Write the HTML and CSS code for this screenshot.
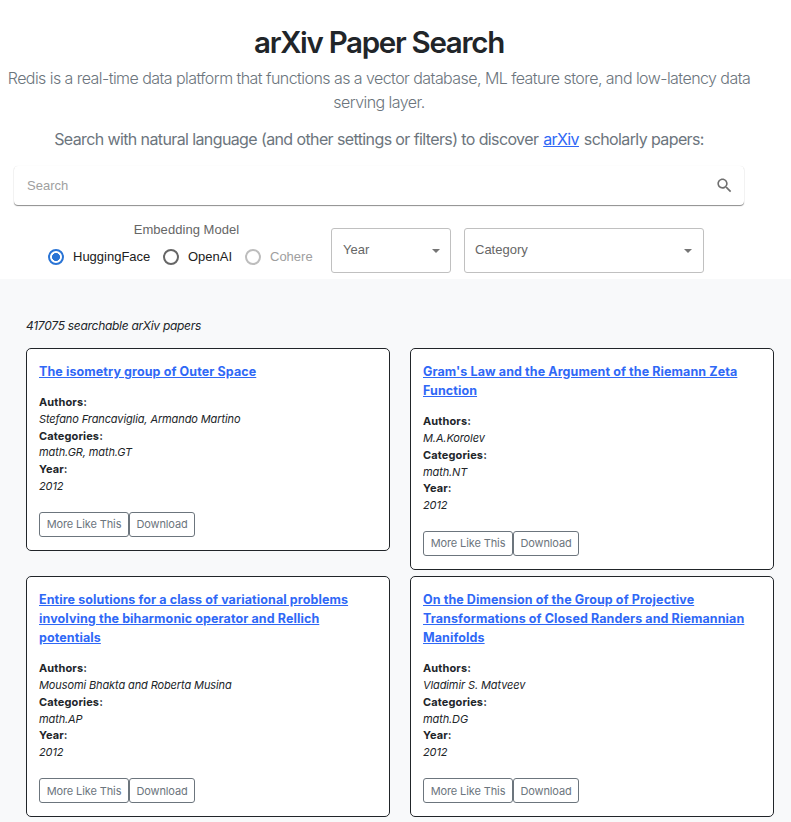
FILE: index.html
```html
<!DOCTYPE html>
<html lang="en">
<head>
<meta charset="utf-8">
<title>arXiv Paper Search</title>
<link rel="stylesheet" href="styles.css">
</head>
<body>
<header class="hero">
  <h1>arXiv Paper Search</h1>
  <p class="lead">Redis is a real-time data platform that functions as a vector database, ML feature store, and low-latency data<br>serving layer.</p>
  <p class="lead second">Search with natural language (and other settings or filters) to discover <a href="#">arXiv</a> scholarly papers:</p>
  <div class="search"><span>Search</span>
    <svg width="19" height="19" viewBox="0 0 24 24"><path d="M15.5 14h-.79l-.28-.27C15.41 12.59 16 11.11 16 9.5 16 5.91 13.09 3 9.5 3S3 5.91 3 9.5 5.91 16 9.5 16c1.61 0 3.09-.59 4.23-1.57l.27.28v.79l5 4.99L20.49 19l-4.99-5zm-6 0C7.01 14 5 11.99 5 9.5S7.01 5 9.5 5 14 7.01 14 9.5 11.99 14 9.5 14z"/></svg>
  </div>
  <div class="controls">
    <div class="model">
      <div class="model-label">Embedding Model</div>
      <div class="radios">
        <label class="on"><i></i><span>HuggingFace</span></label>
        <label><i></i><span>OpenAI</span></label>
        <label class="off"><i></i><span>Cohere</span></label>
      </div>
    </div>
    <div class="select year">Year<b></b></div>
    <div class="select category">Category<b></b></div>
  </div>
</header>
<main>
  <p class="count">417075 searchable arXiv papers</p>
  <div class="grid">
    <article>
      <h2><a href="#">The isometry group of Outer Space</a></h2>
      <div class="meta"><strong>Authors:</strong><em>Stefano Francaviglia, Armando Martino</em><strong>Categories:</strong><em>math.GR, math.GT</em><strong>Year:</strong><em>2012</em></div>
      <div class="buttons"><button>More Like This</button><button>Download</button></div>
    </article>
    <article>
      <h2><a href="#">Gram's Law and the Argument of the Riemann Zeta<br>Function</a></h2>
      <div class="meta"><strong>Authors:</strong><em>M.A.Korolev</em><strong>Categories:</strong><em>math.NT</em><strong>Year:</strong><em>2012</em></div>
      <div class="buttons"><button>More Like This</button><button>Download</button></div>
    </article>
    <article>
      <h2><a href="#">Entire solutions for a class of variational problems<br>involving the biharmonic operator and Rellich<br>potentials</a></h2>
      <div class="meta"><strong>Authors:</strong><em>Mousomi Bhakta and Roberta Musina</em><strong>Categories:</strong><em>math.AP</em><strong>Year:</strong><em>2012</em></div>
      <div class="buttons"><button>More Like This</button><button>Download</button></div>
    </article>
    <article>
      <h2><a href="#">On the Dimension of the Group of Projective<br>Transformations of Closed Randers and Riemannian<br>Manifolds</a></h2>
      <div class="meta"><strong>Authors:</strong><em>Vladimir S. Matveev</em><strong>Categories:</strong><em>math.DG</em><strong>Year:</strong><em>2012</em></div>
      <div class="buttons"><button>More Like This</button><button>Download</button></div>
    </article>
  </div>
</main>
</body>
</html>
```

FILE: styles.css
```css
* { box-sizing: border-box; }
body { margin: 0; width: 791px; height: 822px; overflow: hidden; background: #f8f9fa; color: #212529; font-family: Inter, sans-serif; }
h1, h2, p { margin: 0; }
a { color: #2f68f6; }
.hero { height: 279px; background: #fff; padding-top: 24px; }
.hero h1, .lead { width: 758px; text-align: center; white-space: nowrap; }
.hero h1 { font-size: 29.5px; line-height: 37px; font-weight: 600; letter-spacing: -1.3px; }
.lead { margin-top: 5px; font-size: 16px; line-height: 24px; font-weight: 300; letter-spacing: -0.555px; color: #6c757d; }
.second { margin-top: 13px; font-weight: 400; letter-spacing: -0.61px; }
.second a { margin: 0 1px; }
.search, .controls { font-family: "Liberation Sans", Arial, sans-serif; font-size: 13px; }
.search { width: 730px; height: 39px; margin: 15px 0 0 14px; padding: 0 10px 0 13px; border-radius: 4px; display: flex; align-items: center; justify-content: space-between; color: #a0a0a0; box-shadow: 0 1px 1px rgba(0,0,0,.45), 0 0 1px rgba(0,0,0,.1); }
.search svg { fill: #707070; }
.controls { display: flex; padding-left: 48px; margin-top: 17px; }
.model { width: 283px; }
.model-label { width: 277px; text-align: center; line-height: 16px; letter-spacing: 0.05px; color: #666; }
.radios { display: grid; grid-template-columns: 115px 82px auto; margin-top: 10px; line-height: 18px; color: #212121; }
.radios label { display: flex; align-items: center; gap: 9px; }
.radios i { width: 16px; height: 16px; border: 2px solid #666; border-radius: 50%; }
.radios .on i { border-color: #2a74d5; background: radial-gradient(circle, #2a74d5 0 3.7px, #fff 4.3px); }
.radios .off { color: #9e9e9e; }
.radios .off i { border-color: #bdbdbd; }
.select { height: 45px; margin-top: 6px; border: 1px solid #c0c0c0; border-radius: 3px; padding: 0 10px 2px 11px; display: flex; align-items: center; justify-content: space-between; color: #666; }
.select b { margin-top: 2px; border: 4px solid transparent; border-top-color: #757575; border-bottom: 0; }
.year { width: 120px; }
.category { width: 240px; margin-left: 13px; padding-left: 10px; padding-right: 11px; }
main { padding: 39px 17px 0 26px; }
.count { font-size: 12px; line-height: 16px; font-style: italic; letter-spacing: -0.28px; }
.grid { margin-top: 14px; display: grid; grid-template-columns: 364px 364px; column-gap: 20px; row-gap: 6px; align-items: start; }
article { background: #fff; border: 1px solid #212529; border-radius: 5px; padding: 13px 12px; }
h2 { font-size: 12.5px; line-height: 19.1px; font-weight: 700; letter-spacing: 0.1px; white-space: nowrap; }
.meta { margin-top: 13px; font-size: 11px; line-height: 16.8px; }
.meta strong, .meta em { display: block; }
.meta strong { letter-spacing: 0.12px; }
.meta em { letter-spacing: -0.11px; }
.buttons { display: flex; margin-top: 17px; }
button { height: 25px; padding: 0; border: 1px solid #6c757d; border-radius: 3px; background: #fff; color: #6c757d; font: 11px Inter, sans-serif; letter-spacing: -0.11px; white-space: nowrap; }
button:first-child { width: 90px; }
button:last-child { width: 66px; }
```
